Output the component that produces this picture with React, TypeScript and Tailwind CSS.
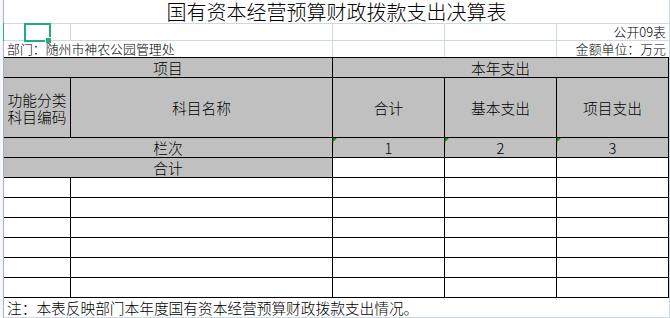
import React from "react";

const FONT = { fontFamily: '"Noto Sans CJK SC", "Noto Sans", sans-serif' };

function Tri() {
  return (
    <span className="absolute left-0 top-0 h-0 w-0 border-l-[4px] border-b-[4px] border-l-[#0a8a0a] border-b-transparent" />
  );
}

function Gray({
  children,
  span,
  mark,
}: {
  children?: React.ReactNode;
  span?: string;
  mark?: boolean;
}) {
  return (
    <div
      className={`relative flex items-center justify-center bg-[#c0c0c0] leading-[19px] ${span ?? ""}`}
    >
      {mark && <Tri />}
      {children}
    </div>
  );
}

export default function App() {
  const rows = [0, 1, 2, 3, 4, 5];
  return (
    <div
      className="relative flex h-[318px] w-[670px] overflow-hidden bg-white font-light text-black"
      style={FONT}
    >
      {/* row header edge */}
      <div className="w-[4px] shrink-0 border-r border-[#aab3c5] bg-[#f6f7f9]" />

      <div className="flex w-[666px] flex-col border-r border-[#d0d7e5]">
        {/* title */}
        <div className="flex h-[24px] items-center justify-center border-b border-[#d0d7e5] text-[20px] leading-[23px]">
          国有资本经营预算财政拨款支出决算表
        </div>

        {/* unit rows */}
        <div className="grid grid-cols-[66px_261px_111px_111px_112px] grid-rows-[16px_16px] gap-px bg-[#d0d7e5] text-[12.9px] leading-[16px]">
          <div className="bg-white" />
          <div className="bg-white" />
          <div className="bg-white" />
          <div className="bg-white" />
          <div className="flex items-end justify-end bg-white pr-[3px] whitespace-nowrap">
            公开09表
          </div>
          <div className="col-span-2 flex items-end bg-white pl-[3px] whitespace-nowrap">
            部门：随州市神农公园管理处
          </div>
          <div className="bg-white" />
          <div className="bg-white" />
          <div className="flex items-end justify-end bg-white pr-[3px] whitespace-nowrap">
            金额单位：万元
          </div>
        </div>

        {/* table */}
        <div className="grid grid-cols-[66px_261px_111px_111px_111px] grid-rows-[19px_59px_19px_19px_repeat(6,19px)] gap-px bg-black pt-px pr-px pb-px text-[14.7px]">
          <Gray span="col-span-2">项目</Gray>
          <Gray span="col-span-3">本年支出</Gray>
          <div className="flex items-center justify-center bg-[#c0c0c0] text-center leading-[17px]">
            功能分类
            <br />
            科目编码
          </div>
          <Gray>科目名称</Gray>
          <Gray>合计</Gray>
          <Gray>基本支出</Gray>
          <Gray>项目支出</Gray>
          <Gray span="col-span-2">栏次</Gray>
          <Gray mark>1</Gray>
          <Gray mark>2</Gray>
          <Gray mark>3</Gray>
          <Gray span="col-span-2">合计</Gray>
          <div className="bg-white" />
          <div className="bg-white" />
          <div className="bg-white" />
          {rows.map((r) => (
            <React.Fragment key={r}>
              <div className="bg-white" />
              <div className="bg-white" />
              <div className="bg-white" />
              <div className="bg-white" />
              <div className="bg-white" />
            </React.Fragment>
          ))}
        </div>

        {/* note */}
        <div className="flex h-[20px] items-end border-b border-[#d0d7e5] pl-[3px] text-[14.7px] leading-[19px] whitespace-nowrap">
          注：本表反映部门本年度国有资本经营预算财政拨款支出情况。
        </div>
      </div>

      {/* selected row marker and cell cursor */}
      <div className="absolute left-[3px] top-[23px] h-[18px] w-px bg-[#1fae77]" />
      <div className="absolute left-[24px] top-[23px] h-[19px] w-[27px] border-2 border-[#1fae77]" />
      <div className="absolute left-[45px] top-[37px] h-[6px] w-[6px] border-l border-t border-white bg-[#1fae77]" />
    </div>
  );
}
